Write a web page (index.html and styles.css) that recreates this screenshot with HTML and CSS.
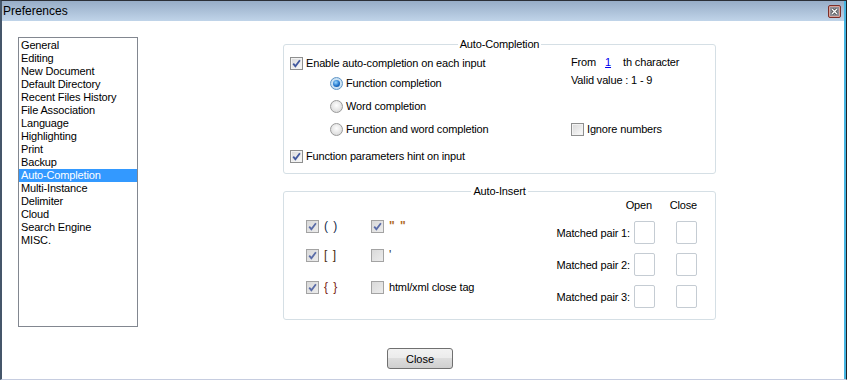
FILE: index.html
```html
<!DOCTYPE html>
<html lang="en">
<head>
    <meta charset="UTF-8">
    <title>Preferences</title>
    <link rel="stylesheet" href="styles.css">
</head>
<body>

    <div class="window">
        <!-- Title bar -->
        <div class="titlebar">
            <span class="title">Preferences</span>
            <span class="close-x">
                <svg width="13" height="13" viewBox="0 0 13 13">
                    <rect x="0.5" y="0.5" width="12" height="12" rx="1.5" fill="#d9a39a" stroke="#7c2e28"/>
                    <rect x="2" y="2" width="9" height="9" fill="#8e8f97"/>
                    <path d="M4 4 L9 9 M9 4 L4 9" stroke="#3a3a3a" stroke-width="2.6"/>
                    <path d="M4 4 L9 9 M9 4 L4 9" stroke="#ffffff" stroke-width="1.4"/>
                </svg>
            </span>
        </div>

        <div class="client">
            <div class="content">
                <!-- Category list -->
                <ul class="category-list">
                    <li>General</li>
                    <li>Editing</li>
                    <li>New Document</li>
                    <li>Default Directory</li>
                    <li>Recent Files History</li>
                    <li>File Association</li>
                    <li>Language</li>
                    <li>Highlighting</li>
                    <li>Print</li>
                    <li>Backup</li>
                    <li class="selected">Auto-Completion</li>
                    <li>Multi-Instance</li>
                    <li>Delimiter</li>
                    <li>Cloud</li>
                    <li>Search Engine</li>
                    <li>MISC.</li>
                </ul>

                <div class="panel">
                    <!-- Auto-Completion group -->
                    <fieldset class="group">
                        <legend>Auto-Completion</legend>
                        <div class="completion-body">
                            <div class="col-left">
                                <div class="row row-enable">
                                    <span class="check"><svg viewBox="0 0 11 11"><path d="M2.2 5.6 L4.4 8.2 L8.9 2.2"/></svg></span>
                                    Enable auto-completion on each input
                                </div>
                                <div class="row indent"><span class="radio on"></span>Function completion</div>
                                <div class="row indent row-gap"><span class="radio"></span>Word completion</div>
                                <div class="row indent row-gap"><span class="radio"></span>Function and word completion</div>
                                <div class="row row-hint">
                                    <span class="check"><svg viewBox="0 0 11 11"><path d="M2.2 5.6 L4.4 8.2 L8.9 2.2"/></svg></span>
                                    Function parameters hint on input
                                </div>
                            </div>
                            <div class="col-right">
                                <div class="from-row">
                                    <span>From</span>
                                    <span class="from-value">1</span>
                                    <span>th character</span>
                                </div>
                                <div class="valid">Valid value : 1 - 9</div>
                                <div class="row row-ignore"><span class="check"></span>Ignore numbers</div>
                            </div>
                        </div>
                    </fieldset>

                    <!-- Auto-Insert group -->
                    <fieldset class="group group-insert">
                        <legend>Auto-Insert</legend>
                        <div class="insert-body">
                            <div class="insert-checks">
                                <div class="row">
                                    <span class="check soft"><svg viewBox="0 0 11 11"><path d="M2.2 5.6 L4.4 8.2 L8.9 2.2"/></svg></span>
                                    <span class="sym sym-paren">( )</span>
                                </div>
                                <div class="row">
                                    <span class="check soft"><svg viewBox="0 0 11 11"><path d="M2.2 5.6 L4.4 8.2 L8.9 2.2"/></svg></span>
                                    <span class="sym sym-quote">" "</span>
                                </div>
                                <div class="row row-second">
                                    <span class="check soft"><svg viewBox="0 0 11 11"><path d="M2.2 5.6 L4.4 8.2 L8.9 2.2"/></svg></span>
                                    <span class="sym sym-bracket">[ ]</span>
                                </div>
                                <div class="row row-second">
                                    <span class="check soft"></span>
                                    <span class="sym">'</span>
                                </div>
                                <div class="row row-third">
                                    <span class="check soft"><svg viewBox="0 0 11 11"><path d="M2.2 5.6 L4.4 8.2 L8.9 2.2"/></svg></span>
                                    <span class="sym sym-brace">{ }</span>
                                </div>
                                <div class="row row-third">
                                    <span class="check soft"></span>
                                    html/xml close tag
                                </div>
                            </div>

                            <div class="pairs">
                                <span></span>
                                <span class="pair-head head-open">Open</span>
                                <span class="pair-head">Close</span>

                                <span class="pair-label">Matched pair 1:</span>
                                <span class="pair-box"></span>
                                <span class="pair-box"></span>

                                <span class="pair-label">Matched pair 2:</span>
                                <span class="pair-box"></span>
                                <span class="pair-box"></span>

                                <span class="pair-label">Matched pair 3:</span>
                                <span class="pair-box"></span>
                                <span class="pair-box"></span>
                            </div>
                        </div>
                    </fieldset>
                </div>
            </div>

            <div class="footer">
                <button class="close-button">Close</button>
            </div>
        </div>
    </div>

</body>
</html>
```

FILE: styles.css
```css
* {
    box-sizing: border-box;
}

body {
    margin: 0;
    font-family: 'Liberation Sans', Arial, sans-serif;
    font-size: 11px;
    letter-spacing: -0.15px;
    color: #000;
}

.window {
    width: 847px;
    height: 380px;
    display: flex;
    flex-direction: column;
    border-top: 1px solid #2b2f36;
    border-left: 2px solid #45566a;
    border-right: 1px solid #1d2229;
    border-bottom: 1px solid #c6cde0;
    padding-right: 2px;
    background-color: #46b5e1;
}

.titlebar {
    height: 20px;
    display: flex;
    align-items: center;
    justify-content: space-between;
    padding: 0 3px 0 1px;
    background: linear-gradient(#97adc7, #c0d4e9);
}

.title {
    font-size: 12px;
    letter-spacing: 0;
}

.close-x {
    display: flex;
    width: 13px;
    height: 13px;
}

.client {
    flex: 1;
    display: flex;
    flex-direction: column;
    background-color: #ffffff;
}

.content {
    display: flex;
    align-items: flex-start;
    padding: 16px 0 0 16px;
}

/* Left category list */
.category-list {
    list-style: none;
    margin: 0;
    padding: 1px 0 0 0;
    width: 120px;
    height: 290px;
    border: 1px solid #828790;
    line-height: 13px;
}

.category-list li {
    padding-left: 2px;
    height: 13px;
    white-space: nowrap;
}

.category-list li.selected {
    background-color: #3399ff;
    color: #ffffff;
}

.panel {
    margin-left: 145px;
}

/* Group boxes */
.group {
    width: 433px;
    margin: 0;
    padding: 0;
    border: 1px solid #d5dfe5;
    border-radius: 3px;
}

.group legend {
    margin: 0 auto;
    padding: 0 2px;
    line-height: 14px;
}

.group-insert {
    margin-top: 10px;
}

.row {
    display: flex;
    align-items: center;
    height: 20px;
    white-space: nowrap;
}

.check {
    flex: none;
    display: inline-flex;
    align-items: center;
    justify-content: center;
    width: 13px;
    height: 13px;
    margin-right: 3px;
    border: 1px solid #8e8f8f;
    background: linear-gradient(135deg, #d8d8d8, #fbfbfb);
    box-shadow: inset 0 0 0 1px #f2f2f2;
}

.check svg {
    width: 11px;
    height: 11px;
}

.check path {
    fill: none;
    stroke: #41589e;
    stroke-width: 1.8;
}

.check.soft {
    border-color: #a3a3a3;
    background: linear-gradient(135deg, #d9d9d9, #ececec);
    box-shadow: none;
    margin-right: 5px;
}

.check.soft path {
    stroke: #5a6ca8;
}

.radio {
    flex: none;
    display: inline-flex;
    align-items: center;
    justify-content: center;
    width: 13px;
    height: 13px;
    margin-right: 3px;
    border-radius: 50%;
    border: 1px solid #9a9a9a;
    background: radial-gradient(circle at 50% 40%, #fdfdfd, #d2d2d2);
}

.radio.on {
    border-color: #5f95c6;
    background: radial-gradient(#e4f2fc, #b9d6ee);
}

.radio.on::after {
    content: "";
    width: 7px;
    height: 7px;
    border-radius: 50%;
    background: radial-gradient(circle at 40% 35%, #9ad8ff, #1f74cc 55%, #0b3c86);
}

/* Auto-Completion */
.completion-body {
    display: flex;
    height: 122px;
}

.col-left {
    width: 287px;
    padding: 2px 0 0 6px;
}

.indent {
    padding-left: 40px;
}

.row-gap {
    margin-top: 3px;
}

.row-hint {
    margin-top: 7px;
}

.col-right {
    padding-top: 1px;
}

.from-row {
    display: flex;
    align-items: center;
    height: 20px;
}

.from-value {
    margin: 0 12px 0 9px;
    color: #0000ee;
    text-decoration: underline;
}

.valid {
    height: 14px;
    line-height: 14px;
    margin-top: 1px;
}

.row-ignore {
    margin-top: 32px;
}

/* Auto-Insert */
.insert-body {
    display: flex;
    justify-content: space-between;
    height: 121px;
    padding-right: 18px;
}

.insert-checks {
    display: grid;
    grid-template-columns: 65px auto;
    align-content: start;
    padding: 18px 0 0 22px;
}

.row-second {
    margin-top: 9px;
}

.row-third {
    margin-top: 12px;
}

.sym {
    font-size: 12px;
    letter-spacing: 1px;
    color: #333;
}

.sym-paren {
    color: #14284a;
}

.sym-bracket {
    color: #4a2c10;
}

.sym-brace {
    color: #7a2412;
}

.sym-quote {
    color: #b06a24;
    font-weight: bold;
}

.pairs {
    display: grid;
    grid-template-columns: auto 25px 42px;
    grid-template-rows: 14px 23px 23px 23px;
    row-gap: 9px;
    align-content: start;
    align-items: center;
}

.pair-head {
    justify-self: end;
    align-self: start;
    line-height: 14px;
    margin-bottom: -3px;
}

.head-open {
    margin-right: 3px;
}

.pair-label {
    white-space: nowrap;
}

.pair-box {
    justify-self: end;
    width: 21px;
    height: 23px;
    border: 1px solid #c5ccd3;
    border-radius: 2px;
}

/* Footer */
.footer {
    margin-top: auto;
    display: flex;
    justify-content: center;
    padding: 0 6px 10px 0;
}

.close-button {
    width: 66px;
    height: 21px;
    padding: 0;
    border: 1px solid #707070;
    border-radius: 3px;
    background: linear-gradient(#f2f2f2 0%, #ebebeb 50%, #dddddd 50%, #cfcfcf 100%);
    font-family: 'Liberation Sans', Arial, sans-serif;
    font-size: 11px;
    color: #000;
}
```
